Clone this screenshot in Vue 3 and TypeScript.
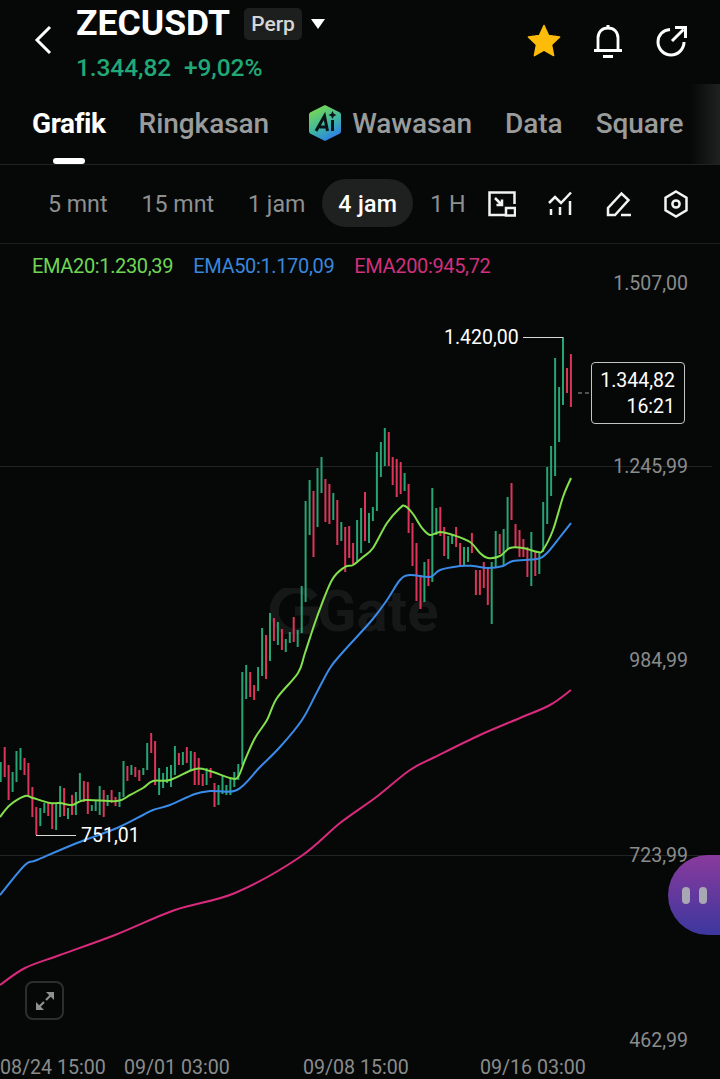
<script setup lang="ts">
// [high y, low y, 1 = up] in page pixels, left to right
const raw: [number, number, number][] = [
  [762,782,1],[747,777,0],[765,800,0],[772,792,1],[751,782,1],[748,770,1],[758,775,0],[763,795,0],
  [787,817,0],[807,835,0],[808,826,1],[803,813,1],[803,816,0],[804,829,0],[803,830,1],[786,817,1],
  [788,816,0],[808,819,1],[795,815,0],[792,815,1],[773,800,1],[781,802,0],[782,814,0],[805,811,1],
  [800,811,1],[786,815,1],[790,817,0],[795,806,1],[790,803,0],[797,806,0],[792,807,1],[761,797,1],
  [766,781,0],[765,775,1],[767,777,0],[770,781,0],[768,775,1],[743,770,1],[733,753,0],[741,785,0],
  [768,795,1],[773,788,1],[767,783,1],[765,787,1],[746,775,1],[753,765,0],[752,765,1],[747,763,0],
  [751,770,1],[752,785,0],[758,785,0],[774,786,0],[768,785,1],[768,778,0],[783,807,0],[785,805,1],
  [775,794,1],[785,795,1],[778,795,1],[772,787,1],[764,780,1],[672,765,1],[665,699,1],[672,697,0],
  [685,700,0],[667,691,1],[628,676,1],[635,679,0],[613,661,1],[618,641,0],[622,645,1],[629,650,0],
  [639,652,1],[632,643,1],[617,642,0],[630,647,1],[586,633,1],[501,602,1],[480,535,1],[491,557,0],
  [468,527,1],[457,493,1],[479,522,0],[484,524,0],[493,520,1],[500,545,0],[522,541,1],[527,572,0],
  [526,558,0],[543,564,0],[520,561,1],[508,553,1],[492,541,0],[513,543,1],[507,521,1],[452,511,1],
  [442,477,1],[428,466,1],[432,466,0],[457,485,0],[459,497,0],[462,494,0],[473,491,1],[484,533,0],
  [523,566,0],[543,601,0],[575,609,0],[562,602,1],[559,586,0],[488,582,1],[508,535,1],[507,536,0],
  [527,556,0],[536,559,1],[535,544,1],[527,547,0],[543,565,0],[547,565,1],[547,562,1],[533,553,0],
  [570,595,0],[570,595,0],[562,588,0],[568,605,0],[562,624,1],[531,567,1],[534,554,0],[529,565,1],
  [497,549,1],[483,520,0],[524,547,0],[530,557,0],[539,557,0],[547,577,0],[532,586,1],[552,576,0],
  [552,574,1],[502,552,1],[467,524,1],[446,496,1],[358,476,1],[387,442,1],[337,405,1],[368,393,0],
  [354,407,0]
]
const chartTop = 244
const candles = raw.map(([hi, lo, up], i) => ({
  x: +(0.7 + i * 3.96).toFixed(1),
  y: hi - chartTop,
  h: lo - hi,
  up: up === 1
}))

type Pt = [number, number]
const ema20: Pt[] = [[0,817],[10,805],[25,796],[33,798],[50,803],[60,803],[72,805],[85,800],[117,801],[130,795],[143,788],[153,781],[170,780],[195,769],[210,771],[230,778],[238,777],[245,760],[255,738],[267,720],[277,698],[298,673],[305,653],[317,617],[332,580],[345,567],[353,565],[363,557],[373,548],[387,523],[400,508],[405,506],[413,514],[422,528],[430,535],[440,532],[453,535],[470,542],[480,553],[488,558],[500,556],[510,548],[523,548],[538,552],[543,550],[553,530],[563,497],[571,478]]
const ema50: Pt[] = [[0,895],[25,865],[37,860],[77,843],[117,828],[143,815],[153,810],[170,805],[195,794],[210,791],[237,790],[260,767],[280,747],[302,720],[317,692],[330,668],[343,652],[372,620],[387,600],[400,580],[410,575],[430,577],[440,570],[460,566],[473,566],[488,568],[503,566],[513,561],[537,559],[547,553],[560,537],[571,523]]
const ema200: Pt[] = [[0,985],[25,968],[60,955],[115,935],[175,910],[235,893],[300,857],[340,823],[375,798],[410,770],[435,757],[480,735],[520,718],[550,705],[571,690]]

// catmull-rom through the read-off points
function smooth(pts: Pt[]): string {
  const p = pts.map(([x, y]) => [x, y - chartTop])
  let d = `M${p[0][0]} ${p[0][1]}`
  for (let i = 0; i < p.length - 1; i++) {
    const a = p[Math.max(i - 1, 0)], b = p[i], c = p[i + 1], e = p[Math.min(i + 2, p.length - 1)]
    const c1x = b[0] + (c[0] - a[0]) / 6, c1y = b[1] + (c[1] - a[1]) / 6
    const c2x = c[0] - (e[0] - b[0]) / 6, c2y = c[1] - (e[1] - b[1]) / 6
    d += `C${c1x.toFixed(1)} ${c1y.toFixed(1)} ${c2x.toFixed(1)} ${c2y.toFixed(1)} ${c[0]} ${c[1]}`
  }
  return d
}
const lines = [
  { d: smooth(ema200), color: '#d92a7c' },
  { d: smooth(ema50), color: '#3b8be8' },
  { d: smooth(ema20), color: '#84e04c' }
]
const tabs = ['Ringkasan', 'Wawasan', 'Data', 'Square']
const intervals = ['5 mnt', '15 mnt', '1 jam', '4 jam', '1 H']
const yLabels = [
  { t: '1.507,00', top: 40 }, { t: '1.245,99', top: 223 }, { t: '984,99', top: 417 },
  { t: '723,99', top: 612 }, { t: '462,99', top: 797 }
]
const xLabels = [
  { t: '08/24 15:00', left: 0 }, { t: '09/01 03:00', left: 124 },
  { t: '09/08 15:00', left: 303 }, { t: '09/16 03:00', left: 480 }
]
</script>

<template>
  <div class="page">
    <header class="head">
      <svg class="back" width="20" height="32" viewBox="0 0 20 32"><path d="M17 3 4 16l13 13" fill="none" stroke="#fff" stroke-width="3"/></svg>
      <div class="title">
        <div class="name-row">
          <span class="name">ZECUSDT</span>
          <span class="perp">Perp</span>
          <span class="caret"></span>
        </div>
        <div class="change"><span>1.344,82</span><span>+9,02%</span></div>
      </div>
      <div class="actions">
        <svg class="star" width="36" height="34" viewBox="0 0 36 34"><path d="M18 1.500 22.600 11.600 33.600 13 25.500 20.600 27.600 31.600 18 26.200 8.400 31.600 10.500 20.600 2.400 13 13.400 11.600Z" fill="#fdbc09" stroke="#fdbc09" stroke-width="1.500" stroke-linejoin="round"/></svg>
        <svg width="32" height="36" viewBox="0 0 32 36"><path d="M6 27V15C6 9 10 5 16 5s10 4 10 10v12M2 27.500h28M11 33.500h10M14.500 3.500h3" fill="none" stroke="#fff" stroke-width="2.800"/></svg>
        <svg width="32" height="34" viewBox="0 0 32 34"><path d="M15 5.500C8 6 3 11 3 18c0 7 5.800 13 13 13s13-6 13-13M17 17 28.500 5.500M20 3.500h10.500V14" fill="none" stroke="#fff" stroke-width="3"/></svg>
      </div>
    </header>

    <nav class="tabs">
      <div class="tab active">Grafik<i class="bar"></i></div>
      <div v-for="t in tabs" :key="t" class="tab" :class="'tab-' + t">
        <svg v-if="t === 'Wawasan'" class="ai" width="34" height="38" viewBox="0 0 34 38">
          <defs><linearGradient id="aig" x1="0.2" y1="0" x2="0.7" y2="1"><stop offset="0" stop-color="#7fdc4a"/><stop offset="0.55" stop-color="#3fb7a0"/><stop offset="1" stop-color="#2c7bf0"/></linearGradient></defs>
          <path d="M17 1 31 8c1.500 .8 2 1.500 2 3v16c0 1.500-.5 2.200-2 3L17 37 3 30c-1.500-.8-2-1.500-2-3V11c0-1.500.5-2.200 2-3Z" fill="url(#aig)"/>
          <path d="M8 27 16.500 12 19.500 27M11.500 23h8" fill="none" stroke="#0a1416" stroke-width="3"/>
          <path d="M24.500 16v11" stroke="#0a1416" stroke-width="3"/>
          <path d="M24.500 7l1.300 2.700 2.700 1.300-2.700 1.300-1.300 2.700-1.300-2.700-2.700-1.300 2.700-1.300Z" fill="#0a1416"/>
        </svg>
        {{ t }}
      </div>
      <div class="fade"></div>
    </nav>

    <div class="bar-row">
      <div class="intervals">
        <span v-for="v in intervals" :key="v" class="iv" :class="{ on: v === '4 jam' }">{{ v }}</span>
      </div>
      <div class="tools">
        <svg width="28" height="26" viewBox="0 0 28 26"><path d="M17 24H1.500V1.500h25V13M7 7l7 7M14 8.500V14H8.500" fill="none" stroke="#f2f2f2" stroke-width="2.500"/><rect x="18" y="17" width="9" height="7.500" fill="none" stroke="#f2f2f2" stroke-width="2.500"/></svg>
        <svg width="26" height="26" viewBox="0 0 26 26"><path d="M1 12l6-6 6 6L23 1.500" fill="none" stroke="#f2f2f2" stroke-width="2.500"/><path d="M3 18v6M12 16v8M22 10v14" stroke="#f2f2f2" stroke-width="2.500"/></svg>
        <svg width="26" height="26" viewBox="0 0 26 26"><path d="M2 24v-7L15.500 2.500l7 6.500L9 24ZM15 24h10" fill="none" stroke="#f2f2f2" stroke-width="2.500"/></svg>
        <svg width="24" height="28" viewBox="0 0 24 28"><path d="M12 1.500 22.500 7.800v12.400L12 26.500 1.500 20.200V7.800Z" fill="none" stroke="#f2f2f2" stroke-width="2.500"/><circle cx="12" cy="14" r="3.600" fill="none" stroke="#f2f2f2" stroke-width="2.500"/></svg>
      </div>
    </div>

    <section class="chart">
      <div class="legend"><span class="g">EMA20:1.230,39</span><span class="b">EMA50:1.170,09</span><span class="r">EMA200:945,72</span></div>

      <div class="mark">
        <svg width="50" height="46" viewBox="0 0 50 46"><path d="M44 10A22 22 0 1 0 44 36V23H25" fill="none" stroke="#161818" stroke-width="9"/></svg>
        <span>Gate</span>
      </div>

      <svg class="plot" width="720" height="835" viewBox="0 0 720 835">
        <line x1="0" y1="222.500" x2="712" y2="222.500" stroke="#222424"/>
        <line x1="0" y1="611.500" x2="712" y2="611.500" stroke="#222424"/>
        <rect v-for="c in candles" :key="c.x" :x="c.x - 1" :y="c.y" width="2" :height="c.h" :fill="c.up ? '#26a474' : '#dc3559'"/>
        <path v-for="l in lines" :key="l.color" :d="l.d" fill="none" :stroke="l.color" stroke-width="2"/>
        <path d="M523 93.500h40M36 591.500h40" stroke="#d8d8d8" stroke-width="1.200" fill="none"/>
        <line x1="578" y1="149" x2="591" y2="149" stroke="#999" stroke-width="1.200" stroke-dasharray="4 3"/>
      </svg>

      <span class="tag hi">1.420,00</span>
      <span class="tag lo">751,01</span>
      <div class="price"><span>1.344,82</span><span>16:21</span></div>

      <span v-for="y in yLabels" :key="y.t" class="ylab" :style="{ top: y.top + 'px' }">{{ y.t }}</span>
      <span v-for="x in xLabels" :key="x.t" class="xlab" :style="{ left: x.left + 'px' }">{{ x.t }}</span>

      <div class="bubble"><i></i><i></i></div>
      <div class="expand">
        <svg width="20" height="20" viewBox="0 0 20 20"><path d="M11 9 17 3M3 17l6-6" stroke="#8f8f8f" stroke-width="2.200"/><path d="M11 1h8v8ZM1 11v8h8Z" fill="#8f8f8f"/></svg>
      </div>
    </section>
  </div>
</template>

<style>
html, body { background: #060808; }
</style>

<style scoped>
.page {
  width: 720px;
  height: 1079px;
  overflow: hidden;
  background: #060808;
  color: #fff;
  font-family: Roboto, "Liberation Sans", sans-serif;
  display: flex;
  flex-direction: column;
}
.head {
  height: 84px;
  display: flex;
  align-items: flex-start;
  padding-left: 33px;
  box-sizing: border-box;
}
.back { margin-top: 24px; margin-right: 23px; }
.title { padding-top: 5px; }
.name-row { display: flex; align-items: center; height: 38px; }
.name { font-size: 35.500px; font-weight: 700; width: 168px; margin-top: -2px; white-space: nowrap; }
.perp {
  background: #1d1f1f;
  border-radius: 5px;
  font-size: 21px;
  font-weight: 500;
  color: #d6d6d6;
  width: 58px;
  height: 32px;
  line-height: 32px;
  text-align: center;
}
.caret {
  margin-left: 9px;
  border-left: 7px solid transparent;
  border-right: 7px solid transparent;
  border-top: 10px solid #fff;
}
.change {
  display: flex;
  gap: 13px;
  margin-top: 10px;
  color: #20a976;
  font-size: 24.500px;
  font-weight: 500;
  letter-spacing: -0.1px;
}
.actions {
  margin-left: auto;
  margin-right: 33px;
  margin-top: 23px;
  display: flex;
  gap: 31px;
  align-items: center;
}
.star { margin-right: -1px; }
.tabs {
  position: relative;
  height: 81px;
  display: flex;
  padding-left: 32px;
  gap: 33px;
  border-bottom: 1px solid #202222;
  box-sizing: border-box;
}
.tab {
  position: relative;
  font-size: 28px;
  font-weight: 500;
  color: #9a9c9c;
  display: flex;
  align-items: center;
  height: 78px;
  letter-spacing: -0.05px;
}
.tab.active { color: #fff; font-weight: 700; letter-spacing: -0.45px; }
.tab-Wawasan { margin-left: 6px; gap: 10px; }
.bar {
  position: absolute;
  left: 21px;
  bottom: -2px;
  width: 32px;
  height: 6px;
  border-radius: 3px;
  background: #fff;
}
.fade {
  position: absolute;
  right: 0;
  top: 0;
  bottom: 0;
  width: 30px;
  background: linear-gradient(to right, rgba(40, 42, 42, 0), rgba(40, 42, 42, 0.75));
}
.bar-row {
  height: 79px;
  display: flex;
  align-items: center;
  border-bottom: 1px solid #1c1e1e;
  box-sizing: border-box;
}
.intervals {
  display: flex;
  align-items: center;
  margin-left: 32px;
  margin-top: -2px;
}
.iv {
  font-size: 23.200px;
  color: #8e9090;
  padding: 0 17px;
  height: 48px;
  line-height: 50px;
  border-radius: 24px;
}
.iv:first-child { margin-left: -1px; }
.iv.on { background: #1f2121; color: #fff; font-weight: 500; padding: 0 16px; letter-spacing: 0.3px; }
.intervals .iv:last-child { padding-right: 0; }
.tools {
  display: flex;
  align-items: center;
  position: absolute;
  left: 488px;
  gap: 32px;
}
.chart {
  position: relative;
  flex: 1;
}
.legend {
  position: absolute;
  left: 32px;
  top: 10px;
  display: flex;
  gap: 20px;
  font-size: 20px;
  letter-spacing: -0.35px;
}
.g { color: #6fd653; }
.b { color: #3a86dc; }
.r { color: #d0307c; }
.plot { position: absolute; left: 0; top: 0; }
.mark {
  position: absolute;
  left: 270px;
  top: 333px;
  display: flex;
  align-items: center;
  gap: 0;
  color: #161818;
  font-size: 58px;
  font-weight: 700;
}
.mark svg { margin-right: -3px; }
.tag { position: absolute; font-size: 19.500px; color: #fff; line-height: 24px; }
.hi { left: 444px; top: 82px; }
.lo { left: 81px; top: 580px; }
.price {
  position: absolute;
  left: 591px;
  top: 118px;
  width: 94px;
  height: 62px;
  box-sizing: border-box;
  border: 1.500px solid #c4c4c4;
  border-radius: 4px;
  background: #060808;
  padding: 5px 9px 0 0;
  display: flex;
  flex-direction: column;
  align-items: flex-end;
  font-size: 19.500px;
  line-height: 26px;
}
.ylab {
  position: absolute;
  right: 32px;
  font-size: 19.500px;
  line-height: 24px;
  color: #8a8c8c;
  transform: translateY(-12px);
}
.xlab {
  position: absolute;
  top: 812px;
  font-size: 19.600px;
  line-height: 24px;
  color: #8a8c8c;
}
.bubble {
  position: absolute;
  right: 0;
  top: 611px;
  width: 52px;
  height: 80px;
  border-radius: 40px 0 0 40px;
  background: linear-gradient(to bottom, #8a3a9c, #3c379f);
  display: flex;
  gap: 9px;
  align-items: center;
  padding-left: 14px;
  box-sizing: border-box;
}
.bubble i {
  width: 8px;
  height: 17px;
  border-radius: 4px;
  background: #a8a8b4;
}
.expand {
  position: absolute;
  left: 25px;
  top: 737px;
  width: 39px;
  height: 39px;
  box-sizing: border-box;
  border: 2px solid #2c2e2e;
  border-radius: 8px;
  display: flex;
  align-items: center;
  justify-content: center;
}
</style>
